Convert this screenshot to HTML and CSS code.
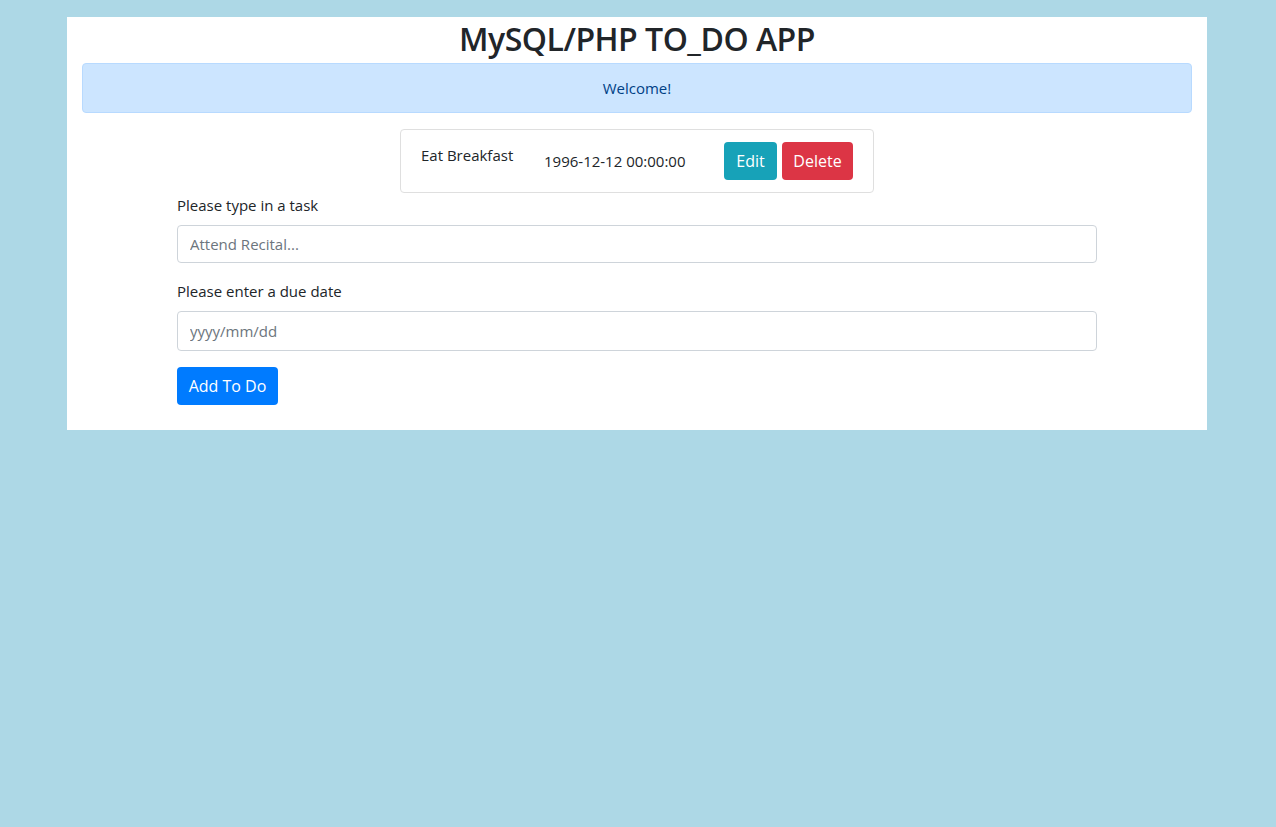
FILE: index.html
```html
<!DOCTYPE html>
<html lang="en">
<head>
<meta charset="utf-8">
<title>MySQL/PHP TO_DO APP</title>
<link rel="stylesheet" href="styles.css">
</head>
<body>
<div class="app">
  <h1 class="title">MySQL/PHP TO_DO APP</h1>
  <div class="alert">Welcome!</div>
  <div class="todo">
    <div class="todo-name">Eat Breakfast</div>
    <div class="todo-date">1996-12-12 00:00:00</div>
    <div class="todo-actions">
      <button class="btn btn-edit">Edit</button>
      <button class="btn btn-delete">Delete</button>
    </div>
  </div>
  <form class="todo-form">
    <div class="form-group">
      <label class="form-label" for="task">Please type in a task</label>
      <input class="form-control" id="task" type="text" placeholder="Attend Recital...">
    </div>
    <div class="form-group">
      <label class="form-label" for="due">Please enter a due date</label>
      <input class="form-control form-control-date" id="due" type="text" placeholder="yyyy/mm/dd">
    </div>
    <button class="btn btn-add" type="button">Add To Do</button>
  </form>
</div>
</body>
</html>
```
FILE: styles.css
```css
* { box-sizing: border-box; }

body {
  margin: 0;
  background: #add8e6;
  font-family: "Open Sans", "Noto Sans", sans-serif;
  font-size: 16px;
  line-height: 24px;
  color: #212529;
}

.app {
  width: 1140px;
  margin: 17px 0 0 67px;
  background: #fff;
  padding: 0 15px 25px;
}

.title {
  margin: 0 0 3px;
  text-align: center;
  font-size: 32px;
  font-weight: 600;
  letter-spacing: -0.5px;
  line-height: 43px;
  color: #212529;
}

.alert {
  margin: 0 0 16px;
  padding: 12px 20px;
  background: #cce5ff;
  border: 1px solid #b8daff;
  border-radius: 4px;
  color: #004085;
  text-align: center;
  font-size: 15px;
}

.todo {
  width: 474px;
  height: 64px;
  margin: 0 auto;
  padding: 0 20px;
  border: 1px solid #dfdfdf;
  border-radius: 4px;
  display: flex;
  align-items: center;
}

.todo-name {
  width: 123px;
  align-self: flex-start;
  padding-top: 13px;
  font-size: 15px;
}

.todo-date {
  width: 180px;
  font-size: 15px;
}

.todo-actions {
  display: flex;
  gap: 5px;
}

.btn {
  height: 38px;
  padding: 0;
  border: 1px solid transparent;
  border-radius: 4px;
  color: #fff;
  font-family: inherit;
  font-size: 16px;
  line-height: 24px;
  text-align: center;
}

.btn-edit { width: 53px; background: #17a2b8; }
.btn-delete { width: 71px; background: #dc3545; }
.btn-add { width: 101px; background: #007bff; }

.todo-form {
  width: 920px;
  margin: 0 auto;
}

.form-group {
  margin-bottom: 16px;
}

.form-label {
  display: block;
  margin-bottom: 8px;
  font-size: 15px;
}

.form-control {
  display: block;
  width: 100%;
  height: 38px;
  padding: 6px 12px;
  border: 1px solid #ced4da;
  border-radius: 4px;
  font-family: inherit;
  font-size: 15px;
  line-height: 24px;
  color: #495057;
  background: #fff;
}

.form-control-date { height: 40px; }

.form-control::placeholder {
  color: #6c757d;
  opacity: 1;
}
```
